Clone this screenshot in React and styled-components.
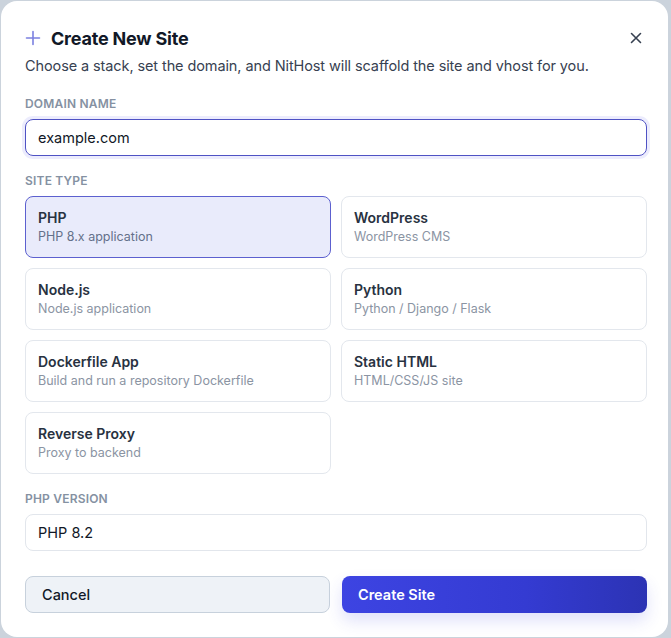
import React from "react";
import styled, { createGlobalStyle } from "styled-components";

const GlobalStyle = createGlobalStyle`
  html, body {
    margin: 0;
    padding: 0;
    background: #cbd3dc;
    font-family: Inter, "Noto Sans", sans-serif;
  }
  * { box-sizing: border-box; }
`;

const Page = styled.div`
  padding: 1px 3px 2px 1px;
`;

const Modal = styled.div`
  background: #ffffff;
  border-radius: 16px;
  padding: 24px 21px 24px 24px;
  min-height: 635px;
  display: flex;
  flex-direction: column;
`;

const Header = styled.div`
  display: flex;
  align-items: center;
  justify-content: space-between;
  height: 26px;
`;

const Title = styled.h1`
  margin: 0;
  display: flex;
  align-items: center;
  gap: 10px;
  font-size: 18px;
  font-weight: 700;
  color: #111827;
  letter-spacing: -0.2px;
`;

const CloseButton = styled.button`
  border: 0;
  background: none;
  padding: 0;
  margin-right: 4px;
  display: flex;
  color: #374151;
  cursor: pointer;
`;

const Subtitle = styled.p`
  margin: 6px 0 0 0;
  font-size: 14.5px;
  color: #374151;
  letter-spacing: -0.1px;
`;

const Label = styled.div`
  margin-top: ${p => p.$top}px;
  margin-bottom: 8px;
  font-size: 12px;
  font-weight: 600;
  color: #8591a2;
  text-transform: uppercase;
  letter-spacing: 0.2px;
`;

const Field = styled.div`
  height: 37px;
  border-radius: 8px;
  border: 1px solid ${p => (p.$focused ? "#4f52c4" : "#e2e6ec")};
  box-shadow: ${p => (p.$focused ? "0 0 0 3px rgba(99, 102, 241, 0.12)" : "none")};
  display: flex;
  align-items: center;
  padding: 0 12px;
  font-size: 14.5px;
  color: #111827;
`;

const Grid = styled.div`
  display: grid;
  grid-template-columns: 1fr 1fr;
  gap: 10px;
`;

const TypeCard = styled.div`
  height: 62px;
  border-radius: 8px;
  border: 1px solid ${p => (p.$selected ? "#5c60cf" : "#e3e7ed")};
  background: ${p => (p.$selected ? "#e9ebfb" : "#ffffff")};
  padding: 12px 12px 0 12px;
  display: flex;
  flex-direction: column;
  gap: 3px;
`;

const TypeName = styled.div`
  font-size: 14px;
  font-weight: 600;
  color: #283241;
`;

const TypeDesc = styled.div`
  font-size: 12.5px;
  color: ${p => (p.$selected ? "#64708a" : "#8b94a3")};
`;

const Actions = styled.div`
  display: grid;
  grid-template-columns: 1fr 1fr;
  gap: 12px;
  margin-top: 25px;
`;

const Button = styled.button`
  height: 37px;
  border-radius: 8px;
  text-align: left;
  padding: 0 16px;
  font-family: inherit;
  font-size: 14.5px;
  cursor: pointer;
  ${p =>
    p.$primary
      ? `
    border: 0;
    color: #ffffff;
    font-weight: 600;
    background: linear-gradient(90deg, #3d44e2 0%, #343bd2 60%, #2c33b4 100%);
    box-shadow: 0 8px 16px rgba(60, 68, 226, 0.16);
  `
      : `
    border: 1px solid #c7d1dc;
    color: #111827;
    font-weight: 500;
    background: #eef2f7;
  `}
`;

const siteTypes = [
  { name: "PHP", desc: "PHP 8.x application" },
  { name: "WordPress", desc: "WordPress CMS" },
  { name: "Node.js", desc: "Node.js application" },
  { name: "Python", desc: "Python / Django / Flask" },
  { name: "Dockerfile App", desc: "Build and run a repository Dockerfile" },
  { name: "Static HTML", desc: "HTML/CSS/JS site" },
  { name: "Reverse Proxy", desc: "Proxy to backend" }
];

const App = () => {
  const selected = "PHP";
  return (
    <Page>
      <GlobalStyle />
      <Modal>
        <Header>
          <Title>
            <svg width="16" height="16" viewBox="0 0 16 16" fill="none" stroke="#7b80e0" strokeWidth="1.6" strokeLinecap="round">
              <path d="M8 1.5v13M1.5 8h13" />
            </svg>
            Create New Site
          </Title>
          <CloseButton aria-label="Close">
            <svg width="14" height="14" viewBox="0 0 14 14" fill="none" stroke="currentColor" strokeWidth="1.6" strokeLinecap="round">
              <path d="M2.5 2.5l9 9M11.5 2.5l-9 9" />
            </svg>
          </CloseButton>
        </Header>
        <Subtitle>
          Choose a stack, set the domain, and NitHost will scaffold the site and vhost for you.
        </Subtitle>

        <Label $top={22}>Domain Name</Label>
        <Field $focused>example.com</Field>

        <Label $top={17}>Site Type</Label>
        <Grid>
          {siteTypes.map(t => (
            <TypeCard key={t.name} $selected={t.name === selected}>
              <TypeName>{t.name}</TypeName>
              <TypeDesc $selected={t.name === selected}>{t.desc}</TypeDesc>
            </TypeCard>
          ))}
        </Grid>

        <Label $top={17}>PHP Version</Label>
        <Field>PHP 8.2</Field>

        <Actions>
          <Button>Cancel</Button>
          <Button $primary>Create Site</Button>
        </Actions>
      </Modal>
    </Page>
  );
};

export default App;
